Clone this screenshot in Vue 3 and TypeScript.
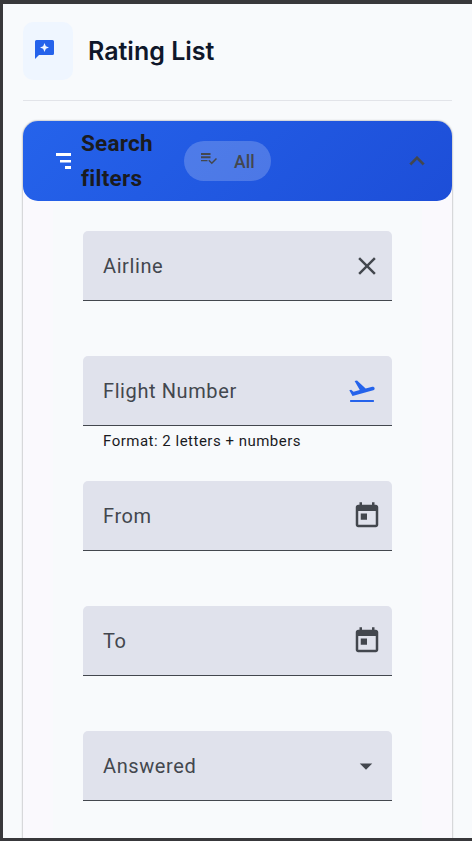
<script setup lang="ts">
type IconName = 'close' | 'takeoff' | 'calendar' | 'arrow'

interface Field {
  label: string
  icon: IconName
  hint?: string
}

const fields: Field[] = [
  { label: 'Airline', icon: 'close' },
  { label: 'Flight Number', icon: 'takeoff', hint: 'Format: 2 letters + numbers' },
  { label: 'From', icon: 'calendar' },
  { label: 'To', icon: 'calendar' },
  { label: 'Answered', icon: 'arrow' },
]

const paths: Record<IconName, string> = {
  close: 'M6.4 19 5 17.6l5.6-5.6L5 6.4 6.4 5l5.6 5.6L17.6 5 19 6.4 13.4 12l5.6 5.6-1.4 1.4-5.6-5.6z',
  takeoff:
    'M2.5 19.2h19v1.6h-19zm19.57-9.56c-.21-.8-1.04-1.28-1.84-1.06L14.92 10l-6.9-6.43-1.93.51 4.14 7.17-4.97 1.33-1.97-1.54-1.45.39 2.59 4.49L21 11.49c.81-.23 1.28-1.05 1.07-1.85z',
  calendar:
    'M19 3h-1V1h-2v2H8V1H6v2H5c-1.11 0-1.99.9-1.99 2L3 19c0 1.1.89 2 2 2h14c1.1 0 2-.9 2-2V5c0-1.1-.9-2-2-2zm0 16H5V8h14v11zM7 10h5v5H7z',
  arrow: 'M7 10l5 5 5-5z',
}
</script>

<template>
  <div class="frame">
    <main class="page">
      <header class="page-head">
        <span class="badge">
          <svg width="19" height="19" viewBox="0 0 19 19">
            <path fill="#2563eb" d="M1.5 0h16Q19 0 19 1.5v12Q19 15 17.500 15H4L0 19V1.500Q0 0 1.500 0z" />
            <path fill="#eff6ff" d="M9.500 3l1.350 3.150L14 7.500l-3.150 1.350L9.500 12 8.150 8.850 5 7.500l3.150-1.350z" />
          </svg>
        </span>
        <h1>Rating List</h1>
      </header>

      <section class="card">
        <div class="card-head">
          <svg class="sort" width="15" height="16" viewBox="0 0 15 16" fill="#fff">
            <path d="M0 0h15v3H0zM4 7h11v2.500H4zM9 13h6v3H9z" />
          </svg>
          <h2>Search filters</h2>
          <span class="chip">
            <svg width="16" height="12" viewBox="0 0 16 12">
              <path fill="#43474e" d="M0 0h9.500v2H0zM0 3.200h9.500v2H0zM0 7h6.500v1.300H0z" />
              <path fill="none" stroke="#43474e" stroke-width="1.500" d="M7.800 7.300l3 2.900 4.700-4.800" />
            </svg>
            <span>All</span>
          </span>
          <svg class="chevron" width="30" height="30" viewBox="0 0 24 24" fill="#43474e" stroke="#43474e" stroke-width="0.2">
            <path d="M12 8l-6 6 1.410 1.410L12 10.830l4.590 4.580L18 14z" />
          </svg>
        </div>
        <div class="card-body">
          <div v-for="f in fields" :key="f.label" class="field">
            <div class="box">
              <span class="label">{{ f.label }}</span>
              <svg :class="['icon', f.icon]" width="30" height="30" viewBox="0 0 24 24">
                <path :d="paths[f.icon]" />
              </svg>
            </div>
            <div v-if="f.hint" class="hint">{{ f.hint }}</div>
          </div>
        </div>
      </section>
    </main>
  </div>
</template>

<style>
body {
  margin: 0;
  background: #38383b;
}
</style>

<style scoped>
.frame {
  box-sizing: border-box;
  height: 841px;
  padding: 4px 0 3px 3px;
  background: #38383b;
  font-family: Roboto, "Liberation Sans", sans-serif;
}
.page {
  box-sizing: border-box;
  height: 834px;
  padding: 18px 20px 0;
  overflow: hidden;
  background: #f8fafc;
}
.page-head {
  display: flex;
  gap: 15px;
  height: 78px;
  border-bottom: 1px solid #e2e4e9;
}
.badge {
  box-sizing: border-box;
  width: 50px;
  height: 58px;
  padding: 18px 0 0 12px;
  border-radius: 10px;
  background: #eff6ff;
}
.badge svg,
.sort,
.chip svg,
.chevron,
.icon {
  display: block;
  flex: none;
}
h1 {
  margin: 0;
  color: #0f172a;
  font: 600 25px/58px Inter, sans-serif;
}
.card {
  height: 760px;
  margin-top: 20px;
  border-radius: 15px;
  background: #faf9fd;
  box-shadow: 0 0 2px rgba(0, 0, 0, 0.5);
}
.card-head {
  box-sizing: border-box;
  display: flex;
  align-items: center;
  height: 80px;
  padding: 0 20px 0 33px;
  border-radius: 15px;
  background: linear-gradient(135deg, #2563eb, #1d4ed8);
}
h2 {
  width: 88px;
  margin: 0 15px 0 10px;
  color: #1a1b1f;
  font-size: 22.5px;
  font-weight: 700;
  letter-spacing: 0.25px;
  line-height: 35px;
}
.chip {
  box-sizing: border-box;
  display: flex;
  gap: 17.5px;
  width: 87px;
  height: 40px;
  padding-left: 16.5px;
  border-radius: 20px;
  background: rgba(255, 255, 255, 0.2);
  color: #43474e;
  font-size: 17.5px;
  font-weight: 500;
  letter-spacing: 0.125px;
  line-height: 42px;
}
.chip svg {
  margin-top: 12px;
}
.chevron {
  margin: -1px 0 0 auto;
}
.card-body {
  height: 680px;
  margin: 0 30px;
  padding: 30px 30px 0;
  box-sizing: border-box;
  background: #f8fafc;
}
.field {
  height: 125px;
}
.box {
  box-sizing: border-box;
  display: flex;
  align-items: center;
  justify-content: space-between;
  height: 70px;
  padding: 0 10px 0 20px;
  border-bottom: 1px solid #43474e;
  border-radius: 5px 5px 0 0;
  background: #e0e2ec;
}
.label {
  color: #43474e;
  font-size: 20px;
  letter-spacing: 0.6px;
}
.icon {
  fill: #43474e;
}
.takeoff {
  margin: 1px 5px 0 0;
  fill: #2563eb;
}
.arrow {
  margin-right: 1px;
}
.hint {
  padding-left: 20px;
  color: #1a1b1f;
  font-size: 15px;
  letter-spacing: 0.5px;
  line-height: 30px;
}
</style>
